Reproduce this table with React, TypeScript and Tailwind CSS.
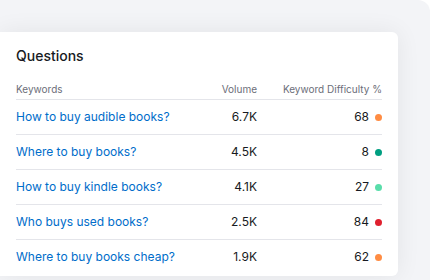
import React from 'react';

type Row = { keyword: string; volume: string; kd: number; color: string };

const rows: Row[] = [
  { keyword: 'How to buy audible books?', volume: '6.7K', kd: 68, color: 'bg-[#ff8c43]' },
  { keyword: 'Where to buy books?', volume: '4.5K', kd: 8, color: 'bg-[#009f81]' },
  { keyword: 'How to buy kindle books?', volume: '4.1K', kd: 27, color: 'bg-[#59ddaa]' },
  { keyword: 'Who buys used books?', volume: '2.5K', kd: 84, color: 'bg-[#e0202e]' },
  { keyword: 'Where to buy books cheap?', volume: '1.9K', kd: 62, color: 'bg-[#ff8c43]' },
];

const App: React.FC = () => {
  return (
    <div className="w-[430px] h-[280px] bg-white overflow-hidden" style={{ fontFamily: 'Inter, "Noto Sans", sans-serif' }}>
      <div className="w-full h-full bg-[#f3f4f7] rounded-tr-[12px] pt-[32px]">
        {/* card */}
        <div className="w-[398px] h-[244px] bg-white rounded-r-[6px] shadow-[0_0_24px_rgba(0,0,0,0.07)] px-4 pt-[14px]">
          <h2 className="text-[14px] leading-5 font-medium text-[#171a22]">Questions</h2>

          <div className="mt-[13px] grid grid-cols-[minmax(0,1fr)_80px_125px] h-[21px] border-b border-[#e4e5ea] text-[10px] leading-5 text-[#6c6e79]">
            <span>Keywords</span>
            <span className="text-right">Volume</span>
            <span className="text-right">Keyword Difficulty %</span>
          </div>

          {rows.map((r, i) => (
            <div
              key={r.keyword}
              className={`grid grid-cols-[minmax(0,1fr)_80px_125px] items-center text-[12px] ${
                i < rows.length - 1 ? 'h-[35px] border-b border-[#e4e5ea]' : 'h-[34px]'
              }`}
            >
              <span className="text-[#006dca] whitespace-nowrap">{r.keyword}</span>
              <span className="text-right text-[#171a22]">{r.volume}</span>
              <span className="flex items-center justify-end gap-[6px] text-[#171a22]">
                {r.kd}
                <span className={`w-[7px] h-[7px] rounded-full ${r.color}`} />
              </span>
            </div>
          ))}
        </div>
      </div>
    </div>
  );
};

export default App;
